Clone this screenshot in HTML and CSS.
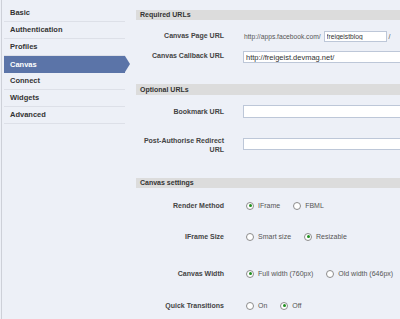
FILE: index.html
```html
<!DOCTYPE html>
<html lang="en">
<head>
  <meta charset="UTF-8" />
  <title>Application Settings | Canvas</title>
  <link rel="stylesheet" href="styles.css">
</head>
<body>

  <div class="page">
    <aside class="sidebar">
      <ul class="tabs">
        <li>Basic</li>
        <li>Authentication</li>
        <li>Profiles</li>
        <li class="active">Canvas</li>
        <li>Connect</li>
        <li>Widgets</li>
        <li>Advanced</li>
      </ul>
    </aside>

    <main class="settings">
      <!-- Required URLs -->
      <h2 class="group-title">Required URLs</h2>

      <div class="field page-url">
        <label class="field-label">Canvas Page URL</label>
        <div class="control">
          <span class="prefix">http://apps.facebook.com/</span>
          <input class="short-input" type="text" value="freigeistblog">
          <span class="suffix">/</span>
        </div>
      </div>

      <div class="field callback-url">
        <label class="field-label">Canvas Callback URL</label>
        <div class="control">
          <input class="long-input" type="text" value="http://freigeist.devmag.net/">
        </div>
      </div>

      <!-- Optional URLs -->
      <h2 class="group-title optional">Optional URLs</h2>

      <div class="field bookmark-url">
        <label class="field-label">Bookmark URL</label>
        <div class="control">
          <input class="long-input tall" type="text" value="">
        </div>
      </div>

      <div class="field redirect-url">
        <label class="field-label">Post-Authorise Redirect URL</label>
        <div class="control">
          <input class="long-input" type="text" value="">
        </div>
      </div>

      <!-- Canvas settings -->
      <h2 class="group-title canvas-settings">Canvas settings</h2>

      <div class="field choice render-method">
        <label class="field-label">Render Method</label>
        <div class="options">
          <label class="option"><input type="radio" name="render" checked> IFrame</label>
          <label class="option"><input type="radio" name="render"> FBML</label>
        </div>
      </div>

      <div class="field choice iframe-size">
        <label class="field-label">IFrame Size</label>
        <div class="options">
          <label class="option"><input type="radio" name="size"> Smart size</label>
          <label class="option"><input type="radio" name="size" checked> Resizable</label>
        </div>
      </div>

      <div class="field choice canvas-width">
        <label class="field-label">Canvas Width</label>
        <div class="options">
          <label class="option"><input type="radio" name="width" checked> Full width (760px)</label>
          <label class="option"><input type="radio" name="width"> Old width (646px)</label>
        </div>
      </div>

      <div class="field choice quick-transitions">
        <label class="field-label">Quick Transitions</label>
        <div class="options">
          <label class="option"><input type="radio" name="quick"> On</label>
          <label class="option"><input type="radio" name="quick" checked> Off</label>
        </div>
      </div>
    </main>
  </div>

</body>
</html>
```

FILE: styles.css
```css
:root {
  --bg-main: #edf0f7;
  --bar-bg: #dcdcdc;
  --fb-blue: #5b74a8;
  --text-main: #333333;
  --text-muted: #555555;
  --input-border: #bdc7d8;
}

* {
  margin: 0;
  padding: 0;
  box-sizing: border-box;
  font-family: 'Liberation Sans', Arial, sans-serif;
}

body {
  background: var(--bg-main);
  color: var(--text-main);
  overflow: hidden;
}

.page {
  display: grid;
  grid-template-columns: 136px 1fr;
  min-height: 100vh;
}

/* Sidebar */
.sidebar {
  margin-left: 1px;
  border-left: 1px solid #cdd0d8;
  padding: 5px 0 0 2px;
}

.tabs {
  list-style: none;
  width: 121px;
}

.tabs li {
  position: relative;
  height: 17px;
  line-height: 16px;
  padding-left: 6px;
  font-size: 7.5px;
  font-weight: 700;
  color: #333;
  border-bottom: 1px solid #dde0e8;
}

.tabs li.active {
  background: var(--fb-blue);
  color: #ffffff;
  border-bottom-color: var(--fb-blue);
  line-height: 17px;
}

.tabs li.active::after {
  content: "";
  position: absolute;
  top: 0;
  right: -5px;
  border-left: 5px solid var(--fb-blue);
  border-top: 8.5px solid transparent;
  border-bottom: 8.5px solid transparent;
}

/* Settings */
.settings {
  padding-top: 10px;
  overflow: hidden;
}

.group-title {
  height: 10px;
  line-height: 10px;
  padding-left: 4px;
  background: var(--bar-bg);
  font-size: 7px;
  font-weight: 700;
  color: #333;
}

.group-title.optional {
  margin-top: 21px;
  height: 11px;
  line-height: 11px;
}

.group-title.canvas-settings {
  margin-top: 24px;
}

.field {
  display: flex;
  align-items: flex-start;
}

.field-label {
  flex: 0 0 88px;
  margin-right: 19px;
  text-align: right;
  font-size: 7px;
  font-weight: 700;
  line-height: 10px;
  color: #444;
}

.control {
  display: flex;
  align-items: center;
  white-space: nowrap;
}

.prefix {
  font-size: 6.7px;
  color: var(--text-muted);
  margin-left: 1px;
}

.suffix {
  font-size: 7px;
  color: var(--text-muted);
  margin-left: 2px;
}

input[type="text"] {
  height: 11px;
  border: 1px solid var(--input-border);
  background: #ffffff;
  padding: 0 2px;
  font-size: 7.5px;
  color: #333;
  outline: none;
}

.short-input {
  width: 63px;
  margin-left: 3px;
}

input.short-input {
  font-size: 6.7px;
}

.long-input {
  width: 220px;
}

.page-url {
  margin-top: 11px;
}

.callback-url {
  margin-top: 9px;
}

.callback-url input {
  height: 12px;
}

.bookmark-url {
  margin-top: 10px;
}

.bookmark-url .field-label {
  padding-top: 2px;
}

.long-input.tall {
  height: 13px;
}

.redirect-url {
  margin-top: 18px;
}

.redirect-url .field-label {
  line-height: 9px;
}

.redirect-url .control {
  margin-top: 2px;
}

.redirect-url input {
  height: 12px;
}

/* Radio rows */
.choice .field-label {
  line-height: 9px;
}

.render-method {
  margin-top: 13px;
}

.iframe-size {
  margin-top: 22px;
}

.canvas-width {
  margin-top: 28px;
}

.quick-transitions {
  margin-top: 23px;
}

.options {
  display: flex;
  gap: 13px;
  padding-left: 3px;
  line-height: 9px;
}

.option {
  display: flex;
  align-items: center;
  gap: 4px;
  font-size: 7px;
  color: var(--text-muted);
  white-space: nowrap;
}

.option input {
  appearance: none;
  width: 8px;
  height: 8px;
  border: 1px solid #8c8c8c;
  border-radius: 50%;
  background: #ffffff;
  display: grid;
  place-items: center;
}

.option input:checked::after {
  content: "";
  width: 3px;
  height: 3px;
  border-radius: 50%;
  background: #1f8f1f;
}
```
